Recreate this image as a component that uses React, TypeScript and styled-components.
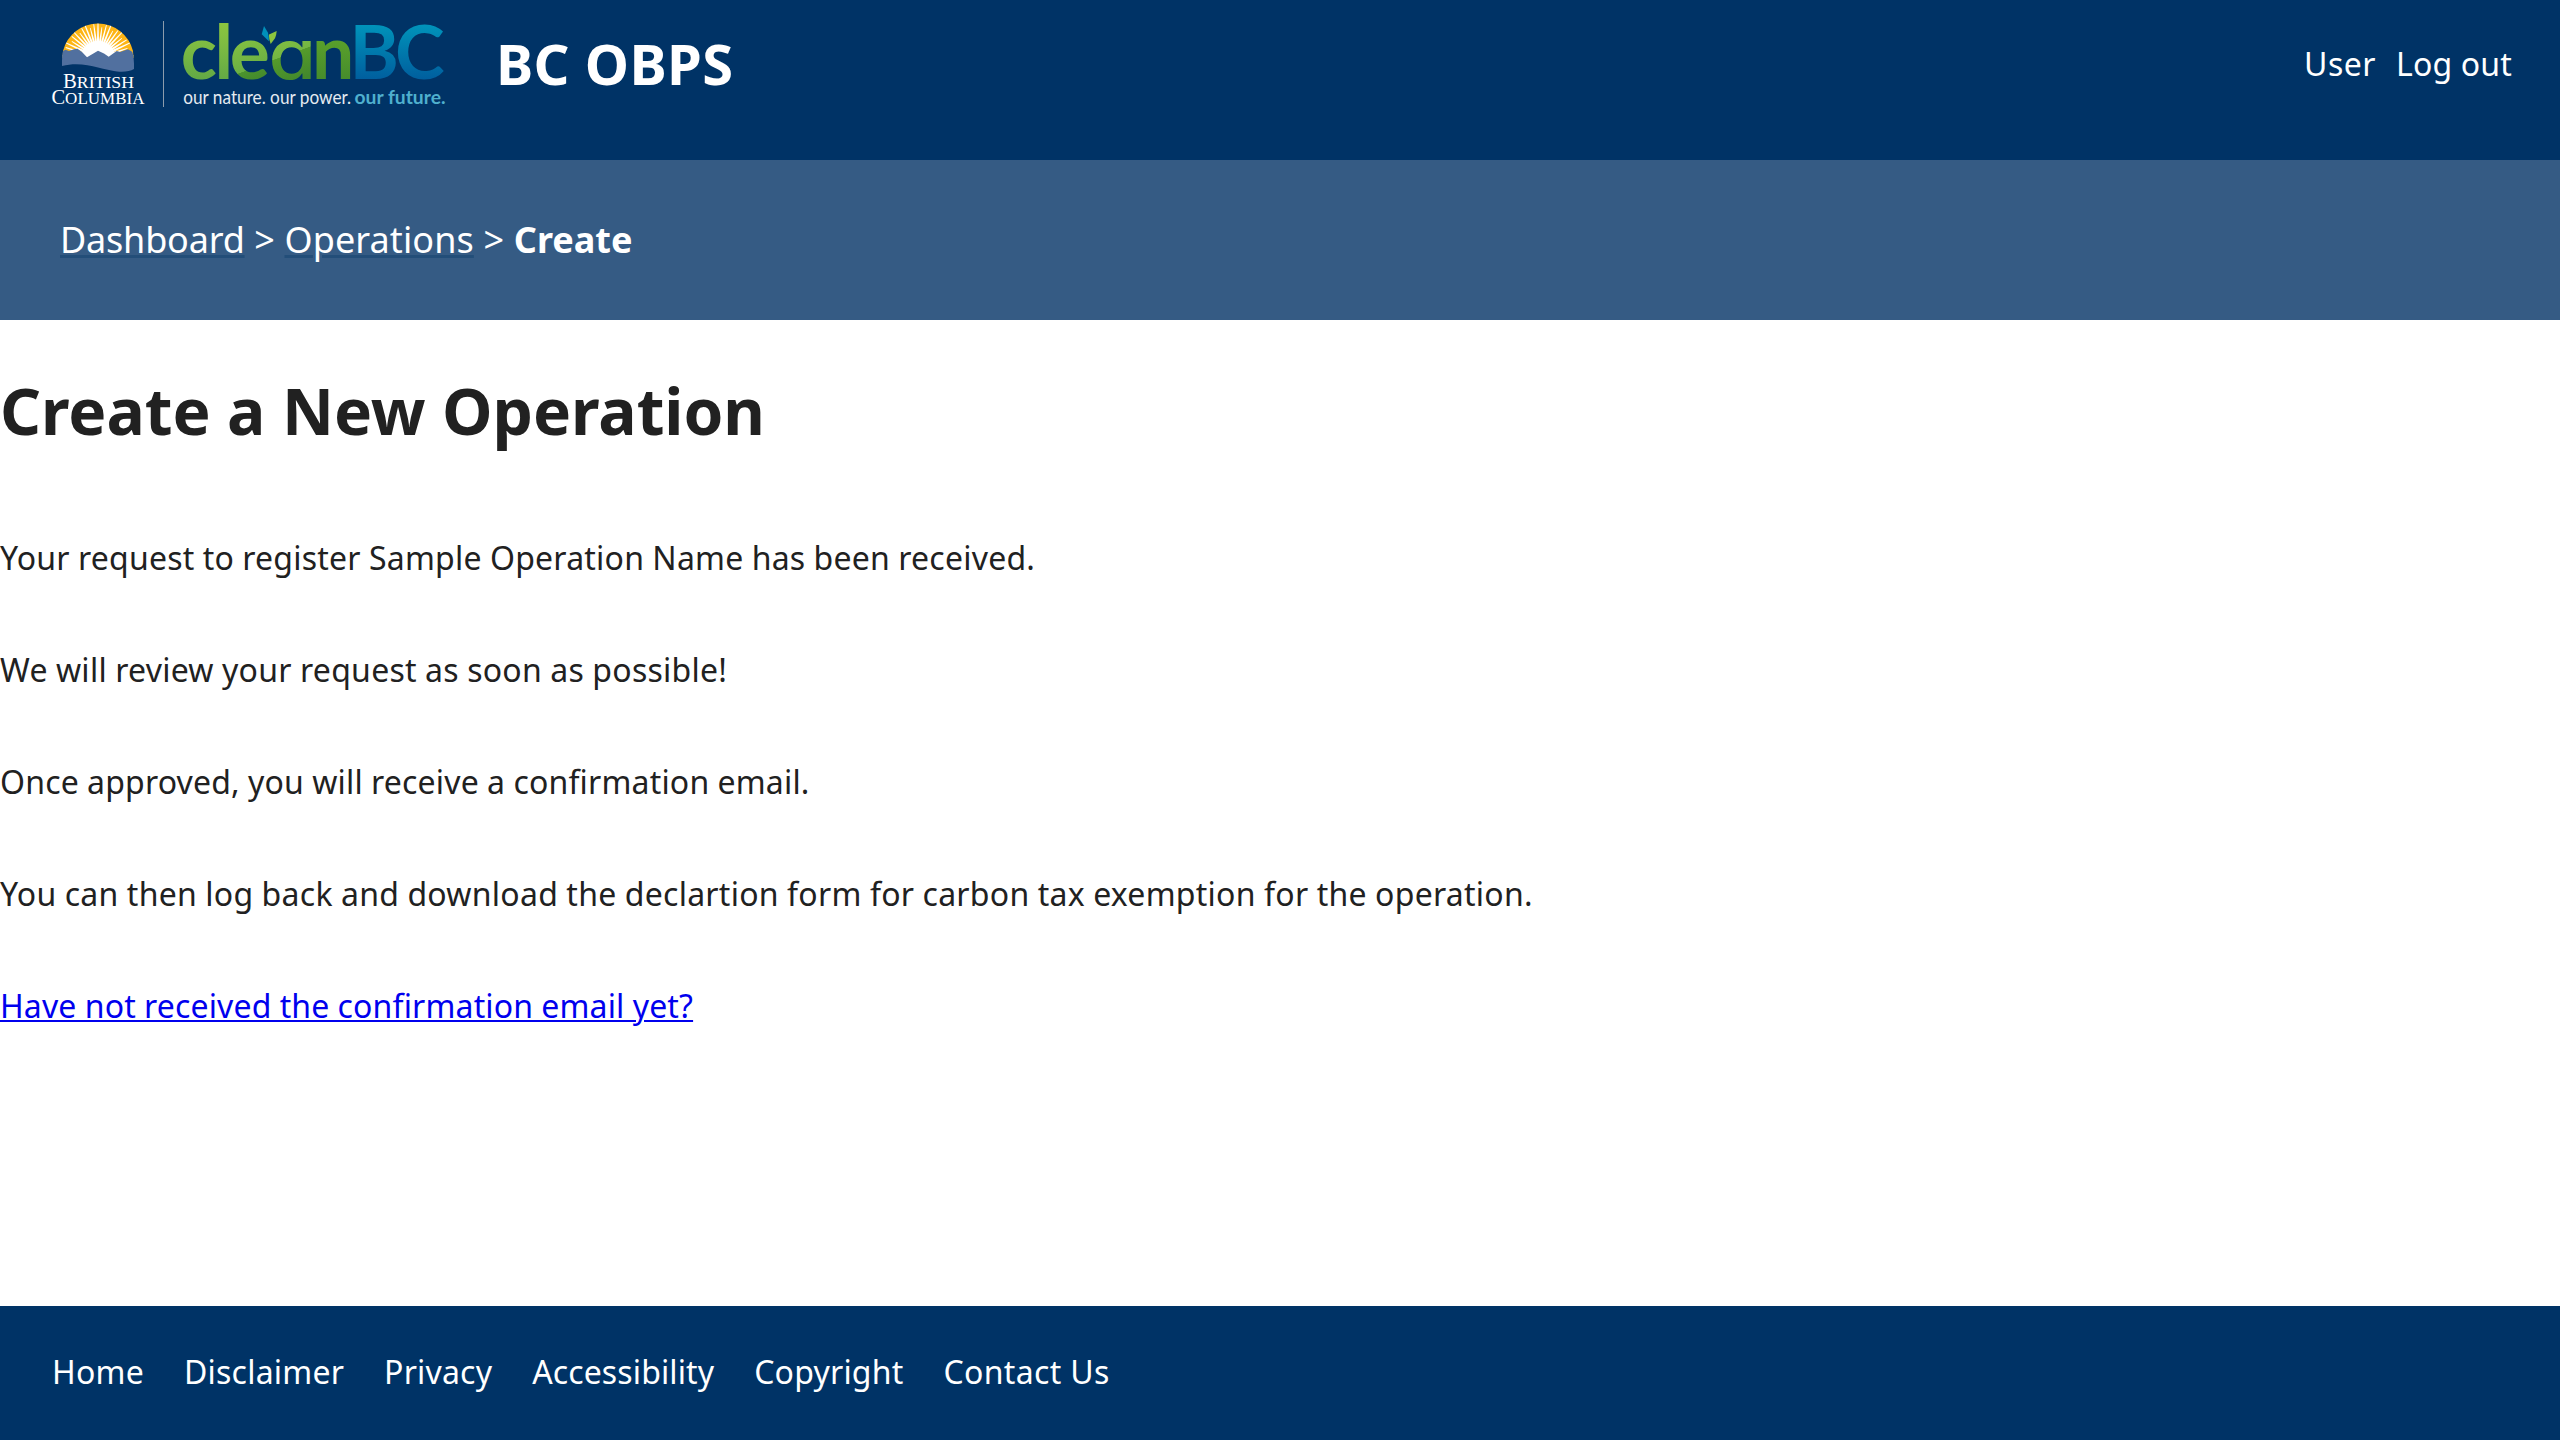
import React from "react";
import styled, { createGlobalStyle } from "styled-components";

const GlobalStyle = createGlobalStyle`
  *, *::before, *::after { box-sizing: border-box; }
  body {
    margin: 0;
    background: #fff;
    color: #212121;
    font-family: "Noto Sans", sans-serif;
    font-size: 32px;
    line-height: 48px;
  }
`;

const Page = styled.div`
  display: flex;
  flex-direction: column;
  min-height: 100vh;
`;

const Header = styled.header`
  height: 160px;
  padding-bottom: 32px;
  background: #003366;
  color: #fff;
`;

const Toolbar = styled.div`
  display: flex;
  align-items: center;
  height: 128px;
  padding: 0 48px;
`;

const Logo = styled.svg`
  display: block;
  flex: none;
  width: 400px;
  height: 128px;
`;

const AlphaGlyph = styled.text`
  font-family: Inter, sans-serif;
  font-size: 69px;
  font-weight: 500;
  font-feature-settings: "cv11";
`;

const AppTitle = styled.h2`
  margin: 0 auto 2px 48px;
  font-size: 56px;
  font-weight: 700;
  line-height: 76px;
  letter-spacing: 0.35px;
`;

const UserNav = styled.nav`
  display: flex;
  gap: 20px;
`;

const NavLink = styled.a<{ $tracking: number }>`
  color: #fff;
  text-decoration: none;
  letter-spacing: ${(p) => p.$tracking}px;
`;

const Breadcrumbs = styled.nav`
  display: flex;
  align-items: center;
  height: 160px;
  padding: 0 60px;
  gap: 9.7px;
  background: #355b84;
  color: #fff;
  font-size: 36px;
`;

const Crumb = styled.a<{ $tracking: number }>`
  color: #fff;
  text-decoration: underline;
  text-decoration-color: #234e79;
  text-decoration-thickness: 3px;
  text-underline-offset: 2px;
  letter-spacing: ${(p) => p.$tracking}px;
`;

const Current = styled.strong`
  font-weight: 700;
`;

const Main = styled.main`
  flex: 1;
`;

const Heading = styled.h1`
  margin: 43px 0 0;
  font-size: 64px;
  font-weight: 700;
  line-height: 96px;
  letter-spacing: -0.07px;
`;

const Message = styled.section`
  display: flex;
  flex-direction: column;
  align-items: flex-start;
  gap: 64px;
  padding-top: 75px;
  word-spacing: -0.32px;
`;

const Paragraph = styled.p<{ $tracking: number }>`
  margin: 0;
  letter-spacing: ${(p) => p.$tracking}px;
`;

const HelpLink = styled.a`
  color: #0000ee;
  text-decoration: underline;
  text-decoration-thickness: 2px;
  text-underline-offset: 2px;
  letter-spacing: 0.15px;
`;

const Footer = styled.footer`
  display: flex;
  align-items: center;
  gap: 40px;
  height: 134px;
  padding: 0 52px 2px;
  background: #003366;
`;

const SUN = { x: 98, y: 58 };
const RAY_COUNT = 25;
const RAYS = Array.from({ length: RAY_COUNT }, (_, i) => {
  const angle = Math.PI * (1 + (i + 0.5) / RAY_COUNT);
  const reach = [36, 31, 34][i % 3];
  const at = (a: number, d: number) =>
    `${(SUN.x + Math.cos(a) * d).toFixed(2)},${(SUN.y + Math.sin(a) * d).toFixed(2)}`;
  return `${at(angle - 0.075, 15)} ${at(angle - 0.012, reach)} ${at(angle + 0.012, reach)} ${at(angle + 0.075, 15)}`;
});

function CleanBCLogo() {
  return (
    <Logo viewBox="48 0 400 128" role="img" aria-label="British Columbia CleanBC">
      <defs>
        <linearGradient id="leaf" gradientUnits="userSpaceOnUse" x1="0" y1="24" x2="0" y2="79">
          <stop offset="0" stopColor="#8bc53f" />
          <stop offset="0.4" stopColor="#7dbb42" />
          <stop offset="1" stopColor="#63a945" />
        </linearGradient>
        <linearGradient id="leafE" gradientUnits="userSpaceOnUse" x1="243" y1="38" x2="258" y2="80">
          <stop offset="0" stopColor="#83c041" />
          <stop offset="0.71" stopColor="#6bb044" />
          <stop offset="0.72" stopColor="#4b942d" />
          <stop offset="1" stopColor="#43892c" />
        </linearGradient>
        <linearGradient id="leafA" gradientUnits="userSpaceOnUse" x1="12" y1="-42" x2="29" y2="0">
          <stop offset="0" stopColor="#83c041" />
          <stop offset="0.41" stopColor="#74b643" />
          <stop offset="0.42" stopColor="#559b2b" />
          <stop offset="1" stopColor="#43892c" />
        </linearGradient>
        <linearGradient id="leafN" gradientUnits="userSpaceOnUse" x1="0" y1="38" x2="0" y2="79">
          <stop offset="0" stopColor="#5ba12b" />
          <stop offset="1" stopColor="#468c2c" />
        </linearGradient>
        <linearGradient id="sea" gradientUnits="userSpaceOnUse" x1="0" y1="24" x2="0" y2="79">
          <stop offset="0" stopColor="#0094bb" />
          <stop offset="1" stopColor="#005f9e" />
        </linearGradient>
        <clipPath id="dome">
          <path d="M62.5 58 L63 51 A36 36 0 0 1 133 51 L133.5 58Z" />
        </clipPath>
      </defs>

      <g clipPath="url(#dome)">
        <circle cx="98" cy="58.5" r="36.3" fill="#fdb515" />
        <circle cx="98" cy="58" r="17" fill="#fff" />
        {RAYS.map((points) => (
          <polygon key={points} points={points} fill="#fff" />
        ))}
      </g>
      <path
        fill="#51709f"
        d="M62 66 Q61.8 56 63 51 L65.5 49.7 L69 51 L74 49.3 L77.5 48.8 L82 52 L87 57.3 L98 50.7 L104 53.5 L108.7 56.7 L116.7 51 L120 52 L128 49.3 L132.3 51.7 Q134.3 58 134 69 Q128 72.5 117 71.5 C102 70 84 60.5 62 66Z"
      />
      <g fill="#fff" fontFamily="Liberation Serif, serif">
        <text x="63" y="88.1" fontSize="20.5" textLength="71" lengthAdjust="spacingAndGlyphs">
          B<tspan fontSize="17.5">RITISH</tspan>
        </text>
        <text x="51.5" y="103.6" fontSize="21" textLength="93" lengthAdjust="spacingAndGlyphs">
          C<tspan fontSize="17.5">OLUMBIA</tspan>
        </text>
      </g>
      <rect x="163" y="21" width="1" height="86" fill="#8c9cac" />

      <g fontFamily="Lato, sans-serif" fontWeight="700" fontSize="75">
        <text y="78.5">
          <tspan x="180.8" fill="url(#leaf)">c</tspan>
          <tspan x="214.6" fill="url(#leaf)">l</tspan>
          <tspan x="229.8" fill="url(#leafE)">e</tspan>
        </text>
        <AlphaGlyph transform="translate(268.6 78.5) scale(1.12 1)" fill="url(#leafA)">
          a
        </AlphaGlyph>
        <text y="78.5">
          <tspan x="312" fill="url(#leafN)">n</tspan>
          <tspan x="349.6" fill="url(#sea)">B</tspan>
          <tspan x="395" fill="url(#sea)">C</tspan>
        </text>
      </g>
      <path d="M264 26 L268 32.7 Q269 37 268.9 41.3 L261.7 34.3Z" fill="#0090ba" />
      <path d="M276.7 31 Q276.4 35 275 38.3 L270.7 44 Q268.6 38 269 34.6Z" fill="#8bc53f" />

      <g fontFamily="Lato, sans-serif">
        <text
          x="183.2"
          y="103.8"
          fill="#e4eaf0"
          fontSize="20"
          fontWeight="400"
          textLength="168"
          lengthAdjust="spacingAndGlyphs"
        >
          our nature. our power.
        </text>
        <text
          x="354.5"
          y="103.8"
          fill="#4fb0ce"
          fontSize="19"
          fontWeight="700"
          textLength="91"
          lengthAdjust="spacingAndGlyphs"
        >
          our future.
        </text>
      </g>
    </Logo>
  );
}

const PARAGRAPHS = [
  { text: "Your request to register Sample Operation Name has been received.", tracking: 0.22 },
  { text: "We will review your request as soon as possible!", tracking: 0.26 },
  { text: "Once approved, you will receive a confirmation email.", tracking: 0.18 },
  {
    text: "You can then log back and download the declartion form for carbon tax exemption for the operation.",
    tracking: 0.26,
  },
];

const FOOTER_LINKS = [
  { label: "Home", tracking: 0.25 },
  { label: "Disclaimer", tracking: 0.21 },
  { label: "Privacy", tracking: 0.19 },
  { label: "Accessibility", tracking: 0.12 },
  { label: "Copyright", tracking: 0.21 },
  { label: "Contact Us", tracking: 0.32 },
];

export default function App() {
  return (
    <>
      <GlobalStyle />
      <Page>
        <Header>
          <Toolbar>
            <CleanBCLogo />
            <AppTitle>BC OBPS</AppTitle>
            <UserNav>
              <NavLink href="#" $tracking={0.5}>User</NavLink>
              <NavLink href="#" $tracking={0.17}>Log out</NavLink>
            </UserNav>
          </Toolbar>
        </Header>
        <Breadcrumbs>
          <Crumb href="#" $tracking={-0.2}>Dashboard</Crumb>
          <span>&gt;</span>
          <Crumb href="#" $tracking={0.08}>Operations</Crumb>
          <span>&gt;</span>
          <Current>Create</Current>
        </Breadcrumbs>
        <Main>
          <Heading>Create a New Operation</Heading>
          <Message>
            {PARAGRAPHS.map(({ text, tracking }) => (
              <Paragraph key={text} $tracking={tracking}>
                {text}
              </Paragraph>
            ))}
            <HelpLink href="#">Have not received the confirmation email yet?</HelpLink>
          </Message>
        </Main>
        <Footer>
          {FOOTER_LINKS.map(({ label, tracking }) => (
            <NavLink key={label} href="#" $tracking={tracking}>
              {label}
            </NavLink>
          ))}
        </Footer>
      </Page>
    </>
  );
}
